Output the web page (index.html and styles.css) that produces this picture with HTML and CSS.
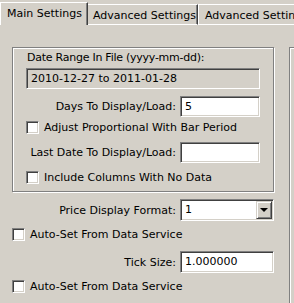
FILE: index.html
```html
<!DOCTYPE html>
<html lang="en">
<head>
    <meta charset="UTF-8">
    <title>Settings</title>
    <link rel="stylesheet" href="styles.css">
</head>
<body>
    <div class="tabs">
        <div class="tab selected">Main Settings</div>
        <div class="tab second">Advanced Settings</div>
        <div class="tab third">Advanced Settings 2</div>
    </div>
    <div class="panel">
        <div class="col">
            <div class="group">
                <div class="caption">Date Range In File (yyyy-mm-dd):</div>
                <div class="edit readonly">2010-12-27 to 2011-01-28</div>
                <div class="row first">
                    <span class="label">Days To Display/Load:</span>
                    <div class="edit small">5</div>
                </div>
                <div class="check inner gap-a">
                    <span class="box"></span>
                    <span>Adjust Proportional With Bar Period</span>
                </div>
                <div class="row gap-b">
                    <span class="label">Last Date To Display/Load:</span>
                    <div class="edit small"></div>
                </div>
                <div class="check inner gap-b">
                    <span class="box"></span>
                    <span>Include Columns With No Data</span>
                </div>
            </div>

            <div class="row outer gap-c">
                <span class="label">Price Display Format:</span>
                <div class="edit combo">
                    <span class="value">1</span>
                    <span class="drop"><span class="arrow"></span></span>
                </div>
            </div>
            <div class="check gap-c">
                <span class="box"></span>
                <span>Auto-Set From Data Service</span>
            </div>
            <div class="row outer gap-d">
                <span class="label">Tick Size:</span>
                <div class="edit wide">1.000000</div>
            </div>
            <div class="check gap-c">
                <span class="box"></span>
                <span>Auto-Set From Data Service</span>
            </div>
        </div>
        <div class="side"></div>
    </div>
</body>
</html>
```

FILE: styles.css
```css
body {
    margin: 0;
    width: 294px;
    height: 303px;
    overflow: hidden;
    background: #d4d0c8;
    font-family: "DejaVu Sans", Verdana, sans-serif;
    font-size: 11px;
    line-height: 13px;
    color: #000;
}

/* tab strip */
.tabs {
    display: flex;
    height: 25px;
}

.tab {
    box-sizing: border-box;
    white-space: nowrap;
    overflow: hidden;
    border-top: 1px solid #fff;
}

.tab.selected {
    width: 88px;
    height: 23px;
    margin-top: 2px;
    padding: 4px 0 0 6px;
    border-left: 1px solid #fff;
    border-right: 1px solid #404040;
    box-shadow: inset -1px 0 0 #808080;
}

.tab.second {
    width: 110px;
    height: 21px;
    margin-top: 4px;
    padding: 4px 0 0 5px;
    border-right: 1px solid #404040;
    border-bottom: 1px solid #fff;
    box-shadow: inset -1px 0 0 #808080;
}

.tab.third {
    flex: 1;
    height: 21px;
    margin-top: 4px;
    padding: 4px 0 0 6px;
    border-left: 1px solid #fff;
    border-bottom: 1px solid #fff;
}

/* page body */
.panel {
    display: flex;
    height: 278px;
}

.col {
    flex: 0 0 289px;
    padding-top: 22px;
}

.side {
    flex: 1;
    margin-top: 22px;
    border-top: 1px solid #808080;
    border-left: 1px solid #808080;
    box-shadow: inset 1px 1px 0 #fff;
}

.group {
    box-sizing: border-box;
    width: 262px;
    height: 145px;
    margin-left: 12px;
    border: 1px solid #808080;
    box-shadow: inset 1px 1px 0 #fff, 1px 1px 0 #fff;
}

.caption {
    margin: 3px 0 0 14px;
    letter-spacing: -0.25px;
    white-space: nowrap;
}

/* sunken edit boxes */
.edit {
    box-sizing: border-box;
    height: 21px;
    padding: 2px 0 0 4px;
    line-height: 15px;
    background: #fff;
    border: 1px solid;
    border-color: #808080 #fff #fff #808080;
    box-shadow: inset 1px 1px 0 #404040, inset -1px -1px 0 #d4d0c8;
}

.edit.readonly {
    width: 234px;
    margin: 4px 0 0 13px;
    background: #d4d0c8;
}

.edit.small {
    width: 80px;
}

.edit.wide {
    width: 94px;
    height: 22px;
}

.edit.combo {
    display: flex;
    justify-content: space-between;
    width: 94px;
    height: 22px;
    padding: 1px 1px 0 4px;
}

.combo .value {
    padding-top: 1px;
}

.drop {
    box-sizing: border-box;
    display: flex;
    align-items: center;
    justify-content: center;
    width: 16px;
    height: 18px;
    background: #d4d0c8;
    border: 1px solid;
    border-color: #d4d0c8 #404040 #404040 #d4d0c8;
    box-shadow: inset 1px 1px 0 #fff, inset -1px -1px 0 #808080;
}

.arrow {
    width: 0;
    height: 0;
    border-left: 4px solid transparent;
    border-right: 4px solid transparent;
    border-top: 4px solid #000;
}

/* label + field rows */
.row {
    display: flex;
    align-items: center;
    gap: 4px;
}

.row .label {
    width: 163px;
    text-align: right;
    white-space: nowrap;
}

.row.outer .label {
    width: 176px;
}

.row.first {
    margin-top: 7px;
}

/* checkboxes */
.check {
    display: flex;
    align-items: center;
    gap: 5px;
    height: 13px;
    margin-left: 12px;
    white-space: nowrap;
}

.check.inner {
    margin-left: 13px;
}

.box {
    box-sizing: border-box;
    width: 13px;
    height: 13px;
    flex: none;
    background: #fff;
    border: 1px solid;
    border-color: #808080 #fff #fff #808080;
    box-shadow: inset 1px 1px 0 #404040, inset -1px -1px 0 #d4d0c8;
}

.gap-a { margin-top: 4px; }
.gap-b { margin-top: 8px; }
.gap-c { margin-top: 7px; }
.gap-d { margin-top: 10px; }
```
